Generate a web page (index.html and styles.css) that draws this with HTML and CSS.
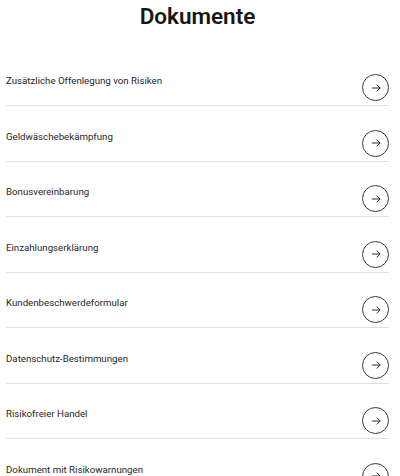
FILE: index.html
```html
<!DOCTYPE html>
<html lang="de">
<head>
    <meta charset="UTF-8">
    <meta name="viewport" content="width=device-width, initial-scale=1.0">
    <title>Dokumente</title>
    <link rel="stylesheet" href="styles.css">
</head>
<body>
    <div class="documents">
        <h1>Dokumente</h1>
        <ul class="doc-list">
            <li class="doc-item">
                <span class="doc-name">Zusätzliche Offenlegung von Risiken</span>
                <a class="doc-link" href="#"><svg viewBox="0 0 16 16"><path d="M2.5 8h11M9 3.5l4.5 4.5-4.5 4.5"/></svg></a>
            </li>
            <li class="doc-item">
                <span class="doc-name">Geldwäschebekämpfung</span>
                <a class="doc-link" href="#"><svg viewBox="0 0 16 16"><path d="M2.5 8h11M9 3.5l4.5 4.5-4.5 4.5"/></svg></a>
            </li>
            <li class="doc-item">
                <span class="doc-name">Bonusvereinbarung</span>
                <a class="doc-link" href="#"><svg viewBox="0 0 16 16"><path d="M2.5 8h11M9 3.5l4.5 4.5-4.5 4.5"/></svg></a>
            </li>
            <li class="doc-item">
                <span class="doc-name">Einzahlungserklärung</span>
                <a class="doc-link" href="#"><svg viewBox="0 0 16 16"><path d="M2.5 8h11M9 3.5l4.5 4.5-4.5 4.5"/></svg></a>
            </li>
            <li class="doc-item">
                <span class="doc-name">Kundenbeschwerdeformular</span>
                <a class="doc-link" href="#"><svg viewBox="0 0 16 16"><path d="M2.5 8h11M9 3.5l4.5 4.5-4.5 4.5"/></svg></a>
            </li>
            <li class="doc-item">
                <span class="doc-name">Datenschutz-Bestimmungen</span>
                <a class="doc-link" href="#"><svg viewBox="0 0 16 16"><path d="M2.5 8h11M9 3.5l4.5 4.5-4.5 4.5"/></svg></a>
            </li>
            <li class="doc-item">
                <span class="doc-name">Risikofreier Handel</span>
                <a class="doc-link" href="#"><svg viewBox="0 0 16 16"><path d="M2.5 8h11M9 3.5l4.5 4.5-4.5 4.5"/></svg></a>
            </li>
            <li class="doc-item">
                <span class="doc-name">Dokument mit Risikowarnungen</span>
                <a class="doc-link" href="#"><svg viewBox="0 0 16 16"><path d="M2.5 8h11M9 3.5l4.5 4.5-4.5 4.5"/></svg></a>
            </li>
        </ul>
    </div>
</body>
</html>
```

FILE: styles.css
```css
body {
    margin: 0;
    background-color: #fff;
    color: #161616;
    font-family: Roboto, Arial, sans-serif;
}
.documents {
    padding: 0 11px 0 6px;
}
h1 {
    margin: 0;
    padding-top: 1px;
    height: 49.5px;
    font-size: 22.5px;
    line-height: 30px;
    font-weight: 600;
    text-align: center;
}
.doc-list {
    list-style: none;
    margin: 0;
    padding: 0;
}
.doc-item {
    display: flex;
    justify-content: space-between;
    align-items: flex-start;
    padding: 22.5px 0 4px;
    border-bottom: 1px solid #e0e0e0;
}
.doc-name {
    font-size: 9.7px;
    line-height: 16px;
    color: #262626;
}
.doc-link {
    display: flex;
    align-items: center;
    justify-content: center;
    width: 27px;
    height: 27px;
    margin-top: 1px;
    box-sizing: border-box;
    border: 1px solid #393939;
    border-radius: 50%;
    color: #161616;
}
.doc-link svg {
    width: 12px;
    height: 12px;
    fill: none;
    stroke: currentColor;
    stroke-width: 1.2;
}
```
